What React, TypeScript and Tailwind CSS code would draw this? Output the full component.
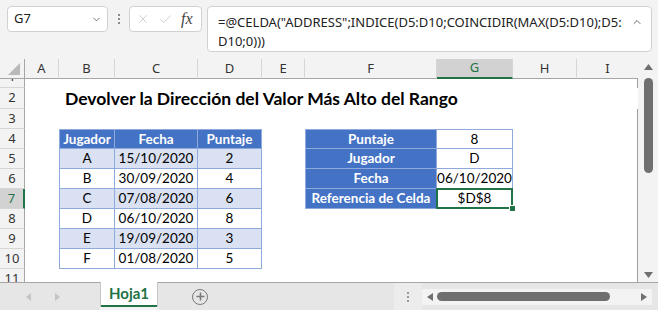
import { ChevronDown, ChevronUp, X, Check } from "lucide-react";

const COLUMNS = ["A", "B", "C", "D", "E", "F", "G", "H", "I"];

const players = [
  ["A", "15/10/2020", "2"],
  ["B", "30/09/2020", "4"],
  ["C", "07/08/2020", "6"],
  ["D", "06/10/2020", "8"],
  ["E", "19/09/2020", "3"],
  ["F", "01/08/2020", "5"],
];

const lookup = [
  ["Puntaje", "8"],
  ["Jugador", "D"],
  ["Fecha", "06/10/2020"],
  ["Referencia de Celda", "$D$8"],
];

const ROWS = [1, 2, 3, 4, 5, 6, 7, 8, 9, 10, 11];

const FormulaBar = () => (
  <div className="h-[59px] flex items-start pt-[6px] pl-[7px] pr-[6px] font-['Noto_Sans',sans-serif]">
    <div className="w-[101px] h-[26px] bg-white border border-[#d1d1d1] rounded-[4px] flex items-center justify-between pl-[6px] pr-[5px] text-[13px] text-[#222]">
      <span>G7</span>
      <ChevronDown className="w-[11px] h-[11px] text-[#555]" strokeWidth={1.8} />
    </div>
    <div className="w-[21px] h-[26px] flex flex-col items-center justify-center gap-[2px]">
      <span className="w-[2px] h-[2px] bg-[#8a8a8a]" />
      <span className="w-[2px] h-[2px] bg-[#8a8a8a]" />
      <span className="w-[2px] h-[2px] bg-[#8a8a8a]" />
    </div>
    <div className="w-[73px] h-[26px] bg-white border border-[#d1d1d1] rounded-[4px] flex items-center pl-[6px] gap-[8px]">
      <X className="w-[14px] h-[14px] text-[#c4c4c4]" strokeWidth={1.3} />
      <Check className="w-[15px] h-[15px] text-[#c4c4c4]" strokeWidth={1.3} />
      <span className="font-['Liberation_Serif',serif] italic text-[16px] text-[#444] leading-none">fx</span>
    </div>
    <div className="ml-[5px] flex-1 h-[46px] bg-white border border-[#d1d1d1] rounded-[4px] flex justify-between pl-[10px] pr-[8px] pt-[6px]">
      <div className="text-[13px] leading-[19px] text-[#222] whitespace-nowrap">
        <div>=@CELDA("ADDRESS";INDICE(D5:D10;COINCIDIR(MAX(D5:D10);D5:</div>
        <div>D10;0)))</div>
      </div>
      <ChevronUp className="w-[12px] h-[12px] mt-[3px] text-[#555]" strokeWidth={1.8} />
    </div>
  </div>
);

const rowHeader = (r: number) => {
  const base =
    "flex items-center justify-center overflow-hidden border-r border-b border-b-[#d6d6d6] text-[13px] font-['Noto_Sans',sans-serif]";
  if (r === 7)
    return (
      <div key="h7" className={`${base} bg-[#d2d2d2] border-r-2 border-r-[#217346] text-[#217346]`}>
        7
      </div>
    );
  if (r === 1)
    return (
      <div key="h1" className={`${base} items-start bg-[#f3f3f3] border-r-[#a6a6a6] text-[#333]`}>
        <div className="h-[20px] -mt-[12px] flex items-center">1</div>
      </div>
    );
  if (r === 11)
    return (
      <div key="h11" className={`${base} items-start bg-[#f3f3f3] border-r-[#a6a6a6] border-b-0 text-[#333]`}>
        <div className="h-[20px] shrink-0 flex items-center">11</div>
      </div>
    );
  return (
    <div key={`h${r}`} className={`${base} bg-[#f3f3f3] border-r-[#a6a6a6] text-[#333]`}>
      {r}
    </div>
  );
};

const cell = (r: number, c: number) => {
  const key = `${r}-${c}`;
  // left table B:D, rows 4-10
  if (r >= 4 && r <= 10 && c >= 1 && c <= 3) {
    const edge = `${c === 1 ? "border-l" : ""} ${r === 4 ? "border-t" : ""}`;
    if (r === 4) {
      const label = ["Jugador", "Fecha", "Puntaje"][c - 1];
      return (
        <div key={key} className={`flex items-center justify-center bg-[#4472c4] text-white font-bold border-r border-b border-[#8ea9db] ${edge}`}>
          {label}
        </div>
      );
    }
    const shaded = r % 2 === 1;
    return (
      <div
        key={key}
        className={`flex items-center justify-center text-black border-r border-b border-[#8ea9db] ${edge} ${shaded ? "bg-[#d9e1f2]" : "bg-white"}`}
      >
        {players[r - 5][c - 1]}
      </div>
    );
  }
  // right table F:G, rows 4-7
  if (r >= 4 && r <= 7 && (c === 5 || c === 6)) {
    const item = lookup[r - 4];
    if (c === 5)
      return (
        <div key={key} className={`flex items-center justify-center bg-[#4472c4] text-white font-bold whitespace-nowrap border-l border-r border-b border-[#8ea9db] ${r === 4 ? "border-t" : ""}`}>
          {item[0]}
        </div>
      );
    return (
      <div key={key} className={`relative flex items-center justify-center bg-white text-black border-r border-b border-[#8ea9db] ${r === 4 ? "border-t" : ""}`}>
        {item[1]}
        {r === 7 && (
          <>
            <div className="absolute -left-[1px] -top-[1px] -right-[1px] -bottom-[1px] border-2 border-[#217346]" />
            <div className="absolute -right-[4px] -bottom-[4px] w-[7px] h-[7px] bg-[#217346] border border-white" />
          </>
        )}
      </div>
    );
  }
  if (c === 8) return <div key={key} className="border-r border-[#9e9e9e]" />;
  return <div key={key} />;
};

const Sheet = () => (
  <div className="flex">
    <div className="w-[638px] h-[223px] grid grid-cols-[25px_34px_56px_83px_64px_43px_132px_76px_64px_61px] grid-rows-[20px_9px_21px_repeat(8,20px)_13px] bg-white font-['Lato',sans-serif] text-[13.5px] overflow-hidden">
      <div className="bg-[#f3f3f3] border-r border-b border-[#a6a6a6] flex items-end justify-end pr-[4px] pb-[3px]">
        <svg width="12" height="12" viewBox="0 0 12 12">
          <path d="M12 0 L12 12 L0 12 Z" fill="#b9b9b9" />
        </svg>
      </div>
      {COLUMNS.map((col, i) =>
        col === "G" ? (
          <div key={col} className="flex items-center justify-center bg-[#d2d2d2] border-r border-r-[#d6d6d6] border-b-2 border-b-[#217346] text-[13px] text-[#217346] font-['Noto_Sans',sans-serif]">
            {col}
          </div>
        ) : (
          <div
            key={col}
            className={`flex items-center justify-center bg-[#f3f3f3] border-b border-b-[#a6a6a6] text-[13px] text-[#333] font-['Noto_Sans',sans-serif] ${i < 8 ? "border-r border-r-[#d6d6d6]" : ""}`}
          >
            {col}
          </div>
        )
      )}
      {ROWS.map((r) => {
        if (r === 2)
          return [
            rowHeader(r),
            <div key="2-0" />,
            <div key="2-title" className="col-span-8 flex items-center pl-[6px] pt-[2px] font-bold text-[17.5px] text-black whitespace-nowrap">
              Devolver la Dirección del Valor Más Alto del Rango
            </div>,
          ];
        return [rowHeader(r), ...COLUMNS.map((_, c) => cell(r, c))];
      })}
    </div>
    <div className="w-[20px] h-[223px] bg-[#f3f3f3] flex flex-col items-center pt-[5px] pb-[4px]">
      <svg width="9" height="6" viewBox="0 0 9 6">
        <path d="M4.5 0 L9 6 L0 6 Z" fill="#6f6f6f" />
      </svg>
      <div className="mt-[8px] w-[9px] h-[95px] rounded-full bg-[#6f6f6f]" />
      <div className="flex-1" />
      <svg width="9" height="6" viewBox="0 0 9 6">
        <path d="M0 0 L9 0 L4.5 6 Z" fill="#6f6f6f" />
      </svg>
    </div>
  </div>
);

const TabBar = () => (
  <div className="flex h-[28px] font-['Lato',sans-serif]">
    <div className="w-[100px] h-full bg-[#e6e6e6] border-t border-[#a6a6a6] flex items-center pl-[26px] gap-[24px]">
      <svg width="5" height="8" viewBox="0 0 5 8">
        <path d="M5 0 L5 8 L0 4 Z" fill="#c4c4c4" />
      </svg>
      <svg width="5" height="8" viewBox="0 0 5 8">
        <path d="M0 0 L5 4 L0 8 Z" fill="#c4c4c4" />
      </svg>
    </div>
    <div className="w-[58px] h-[25px] bg-white border-x border-[#c6c6c6] flex flex-col">
      <div className="flex-1 flex items-center justify-center text-[15px] font-bold text-[#217346]">Hoja1</div>
      <div className="h-[2px] bg-[#217346]" />
    </div>
    <div className="flex-1 h-full bg-[#e6e6e6] border-t border-[#a6a6a6] flex items-center">
      <div className="ml-[34px] w-[16px] h-[16px] rounded-full border-[1.5px] border-[#7a7a7a] flex items-center justify-center">
        <svg width="9" height="9" viewBox="0 0 9 9">
          <path d="M4.5 0.5 V8.5 M0.5 4.5 H8.5" stroke="#7a7a7a" strokeWidth="1.6" />
        </svg>
      </div>
      <div className="ml-[186px] w-[28px] h-full bg-[#ececec] flex flex-col items-center justify-center gap-[2px]">
        <span className="w-[2px] h-[2px] bg-[#9a9a9a]" />
        <span className="w-[2px] h-[2px] bg-[#9a9a9a]" />
        <span className="w-[2px] h-[2px] bg-[#9a9a9a]" />
      </div>
      <div className="w-[230px] h-[16px] bg-[#f3f3f3] flex items-center px-[5px] gap-[4px]">
        <svg width="6" height="8" viewBox="0 0 6 8">
          <path d="M6 0 L6 8 L0 4 Z" fill="#6f6f6f" />
        </svg>
        <div className="w-[173px] h-[9px] rounded-full bg-[#6f6f6f]" />
        <div className="flex-1" />
        <svg width="6" height="8" viewBox="0 0 6 8">
          <path d="M0 0 L6 4 L0 8 Z" fill="#6f6f6f" />
        </svg>
      </div>
      <div className="flex-1 h-full bg-[#e6e6e6]" />
    </div>
  </div>
);

export default function App() {
  return (
    <div className="w-[658px] h-[310px] bg-[#f3f3f3] flex flex-col overflow-hidden">
      <FormulaBar />
      <Sheet />
      <TabBar />
    </div>
  );
}
